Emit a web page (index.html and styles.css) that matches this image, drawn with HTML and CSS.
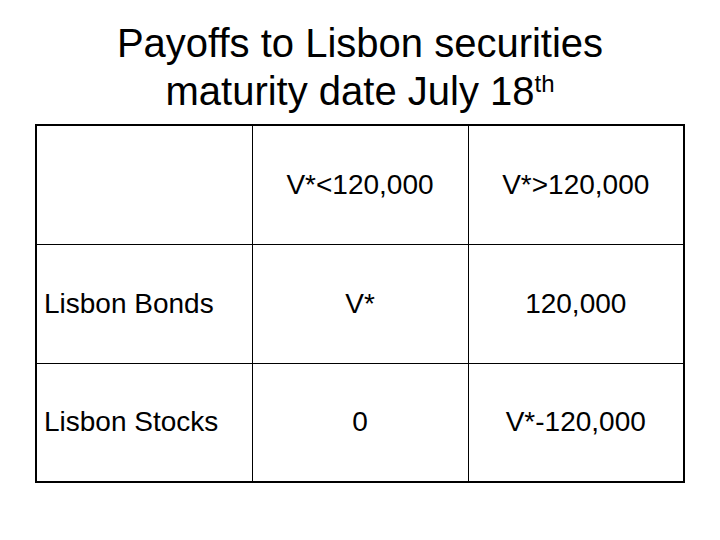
FILE: index.html
```html
<!DOCTYPE html>
<html lang="en">
<head>
<meta charset="utf-8">
<title>Payoffs to Lisbon securities</title>
<link rel="stylesheet" href="styles.css">
</head>
<body>
<div class="slide">
  <h1 class="title">Payoffs to Lisbon securities<br>maturity date July 18<sup class="sup">th</sup></h1>
  <table class="payoffs">
    <tr class="row">
      <td class="cell label"></td>
      <td class="cell">V*&lt;120,000</td>
      <td class="cell">V*&gt;120,000</td>
    </tr>
    <tr class="row">
      <td class="cell label">Lisbon Bonds</td>
      <td class="cell">V*</td>
      <td class="cell">120,000</td>
    </tr>
    <tr class="row">
      <td class="cell label">Lisbon Stocks</td>
      <td class="cell">0</td>
      <td class="cell">V*-120,000</td>
    </tr>
  </table>
</div>
</body>
</html>
```
FILE: styles.css
```css
html, body {
  margin: 0;
  padding: 0;
  background: #fff;
}
body {
  width: 720px;
  height: 540px;
  overflow: hidden;
  font-family: "Liberation Sans", Arial, sans-serif;
  color: #000;
}
.slide {
  padding-top: 19px;
}
.title {
  margin: 0;
  font-weight: normal;
  font-size: 40px;
  line-height: 48px;
  text-align: center;
}
.sup {
  font-size: 24px;
  line-height: 0;
  vertical-align: 13px;
}
.payoffs {
  margin: 9px 0 0 35px;
  width: 650px;
  border-collapse: collapse;
  border: 2px solid #000;
  table-layout: fixed;
}
.row {
  height: 119px;
}
.cell {
  border: 1px solid #000;
  padding: 0;
  font-size: 28px;
  text-align: center;
  vertical-align: middle;
}
.cell.label {
  text-align: left;
  padding-left: 7px;
}
```
